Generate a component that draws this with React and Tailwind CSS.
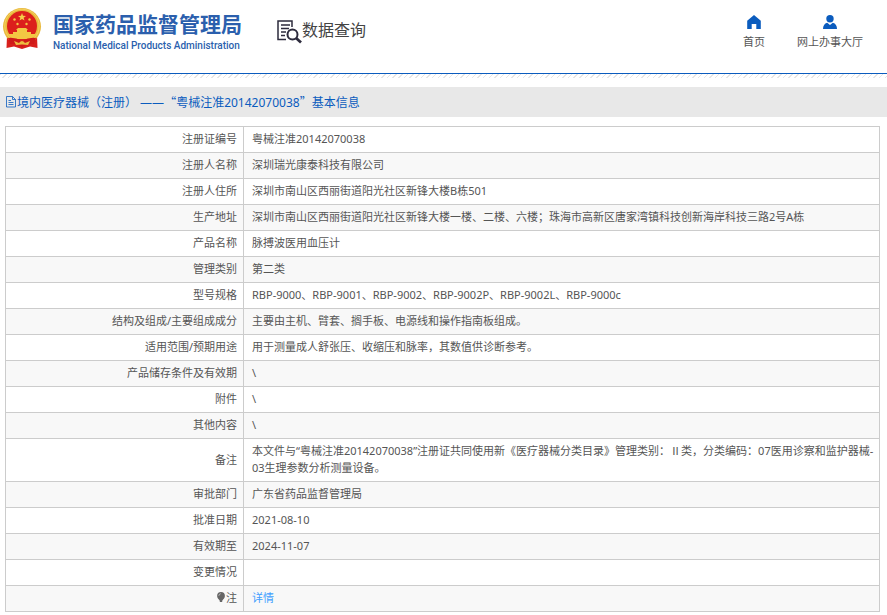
import React from "react";

const rows = [
  { label: "注册证编号", value: "粤械注准20142070038" },
  { label: "注册人名称", value: "深圳瑞光康泰科技有限公司" },
  { label: "注册人住所", value: "深圳市南山区西丽街道阳光社区新锋大楼B栋501" },
  { label: "生产地址", value: "深圳市南山区西丽街道阳光社区新锋大楼一楼、二楼、六楼；珠海市高新区唐家湾镇科技创新海岸科技三路2号A栋" },
  { label: "产品名称", value: "脉搏波医用血压计" },
  { label: "管理类别", value: "第二类" },
  { label: "型号规格", value: "RBP-9000、RBP-9001、RBP-9002、RBP-9002P、RBP-9002L、RBP-9000c" },
  { label: "结构及组成/主要组成成分", value: "主要由主机、臂套、搁手板、电源线和操作指南板组成。" },
  { label: "适用范围/预期用途", value: "用于测量成人舒张压、收缩压和脉率，其数值供诊断参考。" },
  { label: "产品储存条件及有效期", value: "\\" },
  { label: "附件", value: "\\" },
  { label: "其他内容", value: "\\" },
  {
    label: "备注",
    value:
      "本文件与“粤械注准20142070038”注册证共同使用新《医疗器械分类目录》管理类别：Ⅱ类，分类编码：07医用诊察和监护器械-03生理参数分析测量设备。",
  },
  { label: "审批部门", value: "广东省药品监督管理局" },
  { label: "批准日期", value: "2021-08-10" },
  { label: "有效期至", value: "2024-11-07" },
  { label: "变更情况", value: "" },
];

function Emblem() {
  return (
    <svg viewBox="0 0 40 42" className="h-[42px] w-10 shrink-0" aria-hidden="true">
      <path d="M5 28 L4.500 40 L12 38.500 L20 41 L28 38.500 L35.500 40 L35 28 Z" fill="#d8201c" />
      <ellipse cx="20" cy="18.500" rx="19" ry="18.500" fill="#e9b93c" />
      <ellipse cx="20" cy="18" rx="17.200" ry="16.800" fill="none" stroke="#f6d76a" strokeWidth="0.800" />
      <circle cx="20" cy="18" r="15" fill="#dc1f1c" />
      <path d="M20 5 L21 7.800 L24 7.900 L21.600 9.700 L22.500 12.500 L20 10.900 L17.500 12.500 L18.400 9.700 L16 7.900 L19 7.800 Z" fill="#f5cf4a" />
      <g fill="#f3c743">
        <circle cx="12.500" cy="11.500" r="1.200" />
        <circle cx="27.500" cy="11.500" r="1.200" />
        <circle cx="15.500" cy="16" r="1.200" />
        <circle cx="24.500" cy="16" r="1.200" />
        <path d="M14 22 L16 20 H24 L26 22 H25 V24 H29 V26 H34 Q32.500 29.500 30 31 H10 Q7.500 29.500 6 26 H11 V24 H15 V22 Z" />
      </g>
      <path d="M6 30 Q13 29 20 33 Q27 29 34 30 L32 36 Q26 35 20 39 Q14 35 8 36 Z" fill="#cf1a19" />
      <path d="M12 33 L17 35 Q20 31 23 35 L28 33 L26 37 L20 36.500 L14 37 Z" fill="#edbd3f" />
    </svg>
  );
}

function QueryIcon() {
  return (
    <svg viewBox="0 0 25 24" className="h-6 w-[25px] shrink-0" fill="none" stroke="#2d2b3d" aria-hidden="true">
      <path d="M9 19.500 H1 V1 H15 V7" strokeWidth="1.500" />
      <path d="M4 5 H13 M4 8.500 H12 M4 12 H9 M4 15.500 H8" strokeWidth="1.300" />
      <circle cx="15.500" cy="14.500" r="5" strokeWidth="2" />
      <path d="M19 18 L24 22.500" strokeWidth="2.800" />
    </svg>
  );
}

function HomeIcon() {
  return (
    <svg viewBox="0 0 14 14" className="h-3.5 w-3.5" fill="#0b5cbe" aria-hidden="true">
      <path d="M7 0 L13.800 5.800 V14 H9.300 V9 H4.700 V14 H0.200 V5.800 Z" />
    </svg>
  );
}

function UserIcon() {
  return (
    <svg viewBox="0 0 14 14" className="h-3.5 w-3.5" fill="#0b5cbe" aria-hidden="true">
      <circle cx="7" cy="3.700" r="3.700" />
      <path d="M0 14 Q0 9 4.200 7.800 L7 10 L9.800 7.800 Q14 9 14 14 Z" />
    </svg>
  );
}

function DocIcon() {
  return (
    <svg viewBox="0 0 10 12" className="h-3 w-2.5 shrink-0" fill="none" stroke="#0b5cbe" aria-hidden="true">
      <path d="M0.500 0.500 H6.500 L9.500 3.500 V11 H0.500 Z M6.500 0.500 V3.500 H9.500 M2.500 4.500 H5 M2.500 6.500 H7.500 M2.500 8.500 H7.500" strokeWidth="0.800" />
    </svg>
  );
}

function NoteIcon() {
  return (
    <svg viewBox="0 0 8 11" className="mr-px inline-block h-[11px] w-2 align-[-1px]" fill="#666" aria-hidden="true">
      <path d="M4 0 A3.900 3.900 0 0 1 7.900 3.900 C7.900 6.300 6 7 5.500 8.500 H2.500 C2 7 0.100 6.300 0.100 3.900 A3.900 3.900 0 0 1 4 0 Z M2.800 8.500 H5.200 V10 H2.800 Z" />
      <path d="M1.800 3.800 Q2 2 3.700 1.700" fill="none" stroke="#ddd" strokeWidth="0.700" />
    </svg>
  );
}

function Row({ label, children }) {
  return (
    <tr className="even:bg-[#f8f8f8]">
      <th scope="row" className="w-[238px] border border-[#ccc] pt-[3px] pr-1.5 pb-[5px] text-right font-normal">
        {label}
      </th>
      <td className="border border-[#ccc] pt-[3px] pr-1 pb-[5px] pl-2 break-all">{children}</td>
    </tr>
  );
}

export default function App() {
  return (
    <div className="bg-white font-['Noto_Sans','Noto_Sans_CJK_SC',sans-serif] text-[11px] leading-[17px] text-[#555]">
      <header className="flex h-[73px] items-start pt-2 pl-0.5">
        <Emblem />
        <div className="ml-[11px] flex flex-col pt-1 text-[#2b5fad]">
          <span className="text-[21px] leading-6 font-bold">国家药品监督管理局</span>
          <span className="pt-0.5 font-[Roboto,sans-serif] text-[10px] leading-4 font-medium">
            National Medical Products Administration
          </span>
        </div>
        <div className="ml-[35px] flex items-start pt-3 text-[#444]">
          <QueryIcon />
          <span className="text-base leading-5">数据查询</span>
        </div>
        <nav className="mt-[7px] mr-6 ml-auto flex gap-8">
          <a href="#home" className="flex flex-col items-center gap-1">
            <HomeIcon />
            首页
          </a>
          <a href="#hall" className="flex flex-col items-center gap-1">
            <UserIcon />
            网上办事大厅
          </a>
        </nav>
      </header>
      <div className="h-3.5 border-t border-[#0b5cbe] bg-[repeating-linear-gradient(135deg,#e6e6e6_0px,#e6e6e6_1px,#fff_1px,#fff_4px)] bg-[length:100%_4px] bg-no-repeat" />
      <h1 className="flex h-[30px] items-center bg-[#e8e8e8] pl-1.5 text-[12px] text-[#0b5cbe]">
        <DocIcon />
        <span className="ml-px">
          境内医疗器械（注册） ——
          <span className="font-['Noto_Sans_CJK_SC',sans-serif]">“</span>
          粤械注准20142070038
          <span className="font-['Noto_Sans_CJK_SC',sans-serif]">”</span>
          基本信息
        </span>
      </h1>
      <main className="pt-[9px] pr-[7px] pl-[5px]">
        <table className="w-full table-fixed border-collapse">
          <tbody>
            {rows.map((row) => (
              <Row key={row.label} label={row.label}>
                {row.value}
              </Row>
            ))}
            <Row
              label={
                <>
                  <NoteIcon />注
                </>
              }
            >
              <a href="#detail" className="text-[#409eff]">
                详情
              </a>
            </Row>
          </tbody>
        </table>
      </main>
    </div>
  );
}
